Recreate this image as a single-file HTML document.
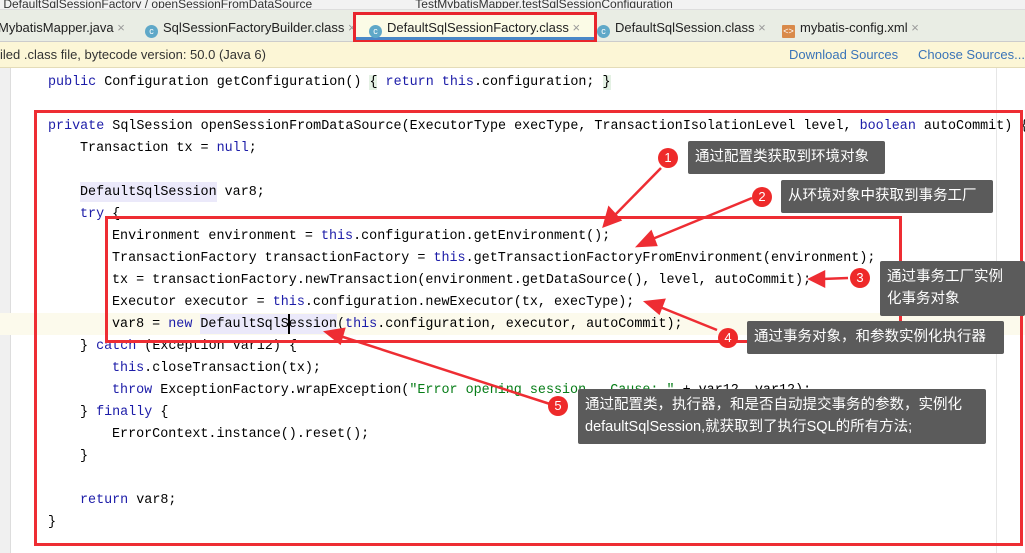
<!DOCTYPE html>
<html><head><meta charset="utf-8"><style>
body{margin:0;width:1025px;height:553px;overflow:hidden;background:#fff;position:relative;font-family:"Liberation Sans","Noto Sans CJK SC",sans-serif}
.a{position:absolute}
.code{position:absolute;font-family:"Liberation Mono",monospace;font-size:13.4px;white-space:pre;color:#000;line-height:22px;height:22px}
.k{color:#1c1ca8}
.s{color:#067d17}
.bub{position:absolute;background:#5b5b5b;color:#fff;font-size:14.5px;line-height:22px;padding:5px 7px;box-sizing:border-box;border-radius:2px}
.c{position:absolute;width:20px;height:20px;border-radius:50%;background:#ee2a2a;color:#fff;font-size:13px;text-align:center;line-height:20px}
.tab{position:absolute;top:14px;height:27px;font-size:13px;line-height:27px;color:#222}
.ic{display:inline-block;width:13px;height:13px;border-radius:50%;background:#5fa8c8;color:#fff;font-size:9px;line-height:13px;text-align:center;vertical-align:-2px;margin-right:5px}
</style></head><body>
<div class="a" style="left:0;top:0;width:1025px;height:9px;background:#f2f2f2;border-bottom:1px solid #ddd"></div>
<div class="a" style="left:0;top:0;font-size:12px;line-height:8px;color:#333;overflow:hidden;height:8px;width:1025px">&nbsp;DefaultSqlSessionFactory  /  openSessionFromDataSource &nbsp;&nbsp;&nbsp;&nbsp;&nbsp;&nbsp;&nbsp;&nbsp;&nbsp;&nbsp;&nbsp;&nbsp;&nbsp;&nbsp;&nbsp;&nbsp;&nbsp;&nbsp;&nbsp;&nbsp;&nbsp;&nbsp;&nbsp;&nbsp;&nbsp;&nbsp;&nbsp;&nbsp;&nbsp; TestMybatisMapper.testSqlSessionConfiguration</div>
<div class="a" style="left:0;top:10px;width:1025px;height:31px;background:#e9ede4;border-bottom:1px solid #ccc"></div>
<div class="tab" style="left:-2px">MybatisMapper.java <span style="color:#999">×</span></div>
<div class="tab" style="left:145px"><span class="ic">c</span>SqlSessionFactoryBuilder.class <span style="color:#999">×</span></div>
<div class="a" style="left:356px;top:14px;width:238px;height:26px;background:#fbfbe6;border-bottom:3px solid #4a88c7;box-sizing:border-box"></div>
<div class="tab" style="left:369px"><span class="ic">c</span>DefaultSqlSessionFactory.class <span style="color:#999">×</span></div>
<div class="tab" style="left:597px"><span class="ic">c</span>DefaultSqlSession.class <span style="color:#999">×</span></div>
<div class="tab" style="left:782px"><span class="ic" style="border-radius:1px;background:#d98a4a">&lt;&gt;</span>mybatis-config.xml <span style="color:#999">×</span></div>
<div class="a" style="left:353px;top:12px;width:244px;height:31px;border:3px solid #e8262d;box-sizing:border-box"></div>
<div class="a" style="left:0;top:42px;width:1025px;height:25px;background:#fcf6d6;border-bottom:1px solid #e4dcb8;font-size:13px;line-height:25px;color:#333">iled .class file, bytecode version: 50.0 (Java 6)</div>
<div class="a" style="left:789px;top:42px;font-size:13px;line-height:25px;color:#3a74b8">Download Sources</div>
<div class="a" style="left:918px;top:42px;font-size:13px;line-height:25px;color:#3a74b8">Choose Sources...</div>
<div class="a" style="left:0;top:68px;width:10px;height:485px;background:#f0f0f0;border-right:1px solid #ddd"></div>
<div class="a" style="left:996px;top:68px;width:1px;height:485px;background:#e6e6e6"></div>
<div class="a" style="left:0;top:313px;width:1025px;height:22px;background:#fcfaec"></div>
<div class="a" style="left:80px;top:182px;width:137px;height:20px;background:#ebe9fa"></div>
<div class="a" style="left:200px;top:314px;width:137px;height:20px;background:#ebe9fa"></div>
<div class="a" style="left:288px;top:314px;width:2px;height:20px;background:#000"></div>

<div class="code" style="left:48px;top:72px"><span class="k">public</span> Configuration getConfiguration() <span style="background:#e4f1e4">{</span> <span class="k">return this</span>.configuration; <span style="background:#e4f1e4">}</span></div>
<div class="code" style="left:48px;top:116px"><span class="k">private</span> SqlSession openSessionFromDataSource(ExecutorType execType, TransactionIsolationLevel level, <span class="k">boolean</span> autoCommit) {</div>
<div class="code" style="left:80px;top:138px">Transaction tx = <span class="k">null</span>;</div>
<div class="code" style="left:80px;top:182px">DefaultSqlSession var8;</div>
<div class="code" style="left:80px;top:204px"><span class="k">try</span> {</div>
<div class="code" style="left:112px;top:226px">Environment environment = <span class="k">this</span>.configuration.getEnvironment();</div>
<div class="code" style="left:112px;top:248px">TransactionFactory transactionFactory = <span class="k">this</span>.getTransactionFactoryFromEnvironment(environment);</div>
<div class="code" style="left:112px;top:270px">tx = transactionFactory.newTransaction(environment.getDataSource(), level, autoCommit);</div>
<div class="code" style="left:112px;top:292px">Executor executor = <span class="k">this</span>.configuration.newExecutor(tx, execType);</div>
<div class="code" style="left:112px;top:314px">var8 = <span class="k">new</span> DefaultSqlSession(<span class="k">this</span>.configuration, executor, autoCommit);</div>
<div class="code" style="left:80px;top:336px">} <span class="k">catch</span> (Exception var12) {</div>
<div class="code" style="left:112px;top:358px"><span class="k">this</span>.closeTransaction(tx);</div>
<div class="code" style="left:112px;top:380px"><span class="k">throw</span> ExceptionFactory.wrapException(<span class="s">"Error opening session.  Cause: "</span> + var12, var12);</div>
<div class="code" style="left:80px;top:402px">} <span class="k">finally</span> {</div>
<div class="code" style="left:112px;top:424px">ErrorContext.instance().reset();</div>
<div class="code" style="left:80px;top:446px">}</div>
<div class="code" style="left:80px;top:490px"><span class="k">return</span> var8;</div>
<div class="code" style="left:48px;top:512px">}</div>

<div class="a" style="left:34px;top:110px;width:989px;height:436px;border:3px solid #ee2d33;box-sizing:border-box"></div>
<div class="a" style="left:105px;top:216px;width:797px;height:127px;border:3px solid #ee2d33;box-sizing:border-box"></div>

<svg class="a" style="left:0;top:0" width="1025" height="553">
<g fill="#ee2d33" stroke="#ee2d33" stroke-width="2.5">
<line x1="661" y1="168" x2="612" y2="218"/><polygon points="604,226 609,208 620,220"/>
<line x1="752" y1="198" x2="650" y2="240"/><polygon points="638,246 651,232 656,245"/>
<line x1="848" y1="278" x2="822" y2="279"/><polygon points="810,279 824,272 824,286"/>
<line x1="717" y1="330" x2="660" y2="307"/><polygon points="646,302 664,300 659,313"/>
<line x1="550" y1="404" x2="340" y2="336"/><polygon points="326,332 344,329 340,343"/>
</g></svg>

<div class="bub" style="left:688px;top:141px;width:197px;height:33px">通过配置类获取到环境对象</div><div class="c" style="left:658px;top:148px">1</div>
<div class="bub" style="left:781px;top:180px;width:212px;height:33px">从环境对象中获取到事务工厂</div><div class="c" style="left:752px;top:187px">2</div>
<div class="bub" style="left:880px;top:261px;width:145px;height:55px;padding-right:10px">通过事务工厂实例化事务对象</div><div class="c" style="left:850px;top:268px">3</div>
<div class="bub" style="left:747px;top:321px;width:257px;height:33px">通过事务对象，和参数实例化执行器</div><div class="c" style="left:718px;top:328px">4</div>
<div class="bub" style="left:578px;top:389px;width:408px;height:55px">通过配置类，执行器，和是否自动提交事务的参数，实例化defaultSqlSession,就获取到了执行SQL的所有方法;</div><div class="c" style="left:548px;top:396px">5</div>
</body></html>
